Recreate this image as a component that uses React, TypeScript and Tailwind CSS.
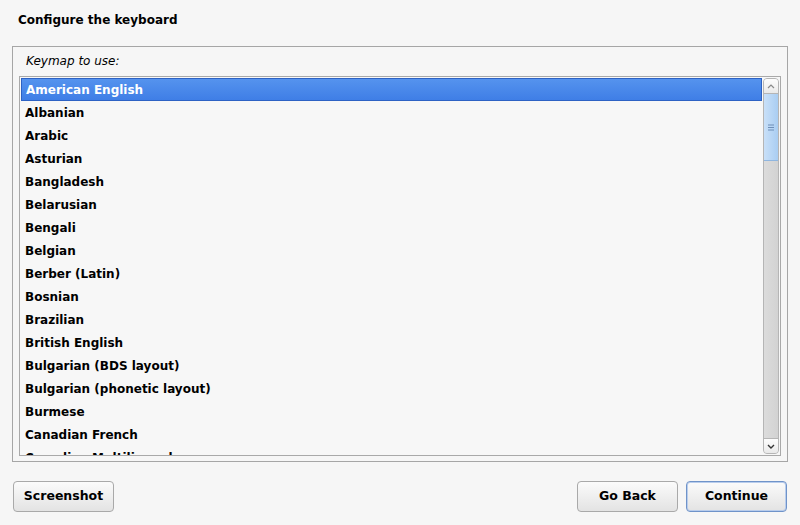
const keymaps = [
  "American English",
  "Albanian",
  "Arabic",
  "Asturian",
  "Bangladesh",
  "Belarusian",
  "Bengali",
  "Belgian",
  "Berber (Latin)",
  "Bosnian",
  "Brazilian",
  "British English",
  "Bulgarian (BDS layout)",
  "Bulgarian (phonetic layout)",
  "Burmese",
  "Canadian French",
  "Canadian Multilingual",
  "Catalan",
];

const font = { fontFamily: '"DejaVu Sans", Verdana, sans-serif' };

function Button({ label, focused }: { label: string; focused?: boolean }) {
  return (
    <button
      className={`h-[31px] w-[101px] rounded-[4px] border text-[12.5px] font-bold text-black bg-gradient-to-b from-[#fbfbfb] to-[#e3e3e3] ${
        focused ? "border-[#6f93c9] shadow-[inset_0_0_0_1px_#b9cdec]" : "border-[#a9a9a9]"
      }`}
    >
      {label}
    </button>
  );
}

export default function App() {
  return (
    <div className="w-[800px] h-[525px] bg-[#f6f6f6] flex flex-col" style={font}>
      <h1 className="text-[12px] font-bold text-black pl-[18px] pt-[11px] h-[46px]">
        Configure the keyboard
      </h1>

      <div className="mx-[12px] w-[776px] h-[416px] border border-[#a6a6a6] flex flex-col px-[6px]">
        <p className="text-[12px] italic text-black pl-[7px] pt-[5px] h-[29px]">Keymap to use:</p>
        <div className="h-[380px] border border-[#a9a9a9] bg-[#f7f7f7] flex">
          <ul className="flex-1 overflow-hidden pt-[1px] pl-[1px] pr-[1px]">
            {keymaps.map((k, i) => (
              <li
                key={k}
                className={`h-[23px] pl-[4px] text-[12px] font-bold leading-[22px] whitespace-nowrap ${
                  i === 0
                    ? "bg-gradient-to-b from-[#5593ee] to-[#3f7ee6] border border-[#2d62c4] text-white pl-[2px] leading-[20px] h-[22px] mb-[1px]"
                    : "text-black"
                }`}
              >
                {k}
              </li>
            ))}
          </ul>
          <div className="w-[16px] my-[1px] mr-[1px] flex flex-col border border-[#b5b5b5] rounded-[4px] overflow-hidden bg-[#d9d9d9]">
            <div className="h-[15px] bg-gradient-to-b from-[#fdfdfd] to-[#e9e9e9] border-b border-[#b5b5b5] flex items-center justify-center">
              <svg width="8" height="5" viewBox="0 0 8 5">
                <path d="M1 4 L4 1 L7 4" fill="none" stroke="#8a8a8a" strokeWidth="1.2" />
              </svg>
            </div>
            <div className="h-[67px] bg-gradient-to-r from-[#c9e0f8] to-[#a9cdf2] border-b border-[#8fb6e0] flex items-center justify-center">
              <svg width="6" height="7" viewBox="0 0 6 7">
                <path d="M0 1H6M0 3.5H6M0 6H6" stroke="#6f8fb8" strokeWidth="1" />
              </svg>
            </div>
            <div className="flex-1 bg-gradient-to-r from-[#dcdcdc] to-[#d2d2d2]" />
            <div className="h-[15px] bg-gradient-to-b from-[#fdfdfd] to-[#e9e9e9] border-t border-[#b5b5b5] flex items-center justify-center">
              <svg width="8" height="5" viewBox="0 0 8 5">
                <path d="M1 1 L4 4 L7 1" fill="none" stroke="#333" strokeWidth="1.4" />
              </svg>
            </div>
          </div>
        </div>
      </div>

      <div className="flex items-center px-[13px] pt-[19px]">
        <Button label="Screenshot" />
        <div className="flex-1" />
        <div className="flex gap-[8px]">
          <Button label="Go Back" />
          <Button label="Continue" focused />
        </div>
      </div>
    </div>
  );
}
